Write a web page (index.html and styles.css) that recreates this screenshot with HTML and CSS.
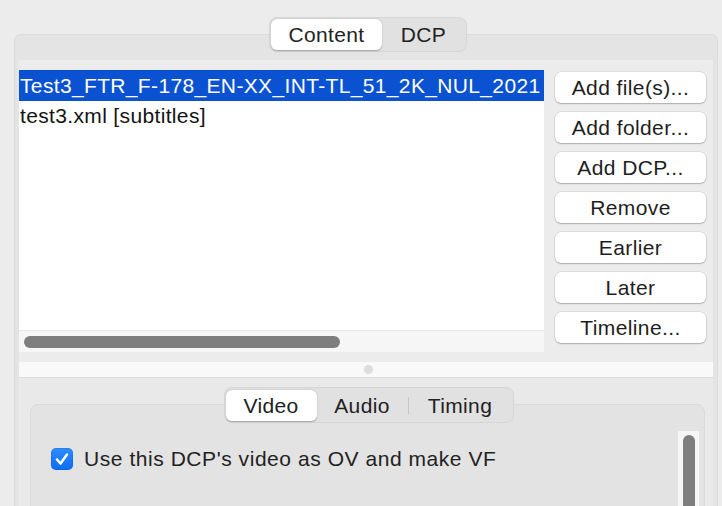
FILE: index.html
```html
<!DOCTYPE html>
<html>
<head>
<meta charset="utf-8">
<link rel="stylesheet" href="styles.css">
</head>
<body>
<div class="app">
  <div class="seg seg-outer">
    <div class="seg-item active">Content</div>
    <div class="seg-item">DCP</div>
  </div>
  <div class="panel">
    <div class="content-pane">
      <div class="list">
        <div class="rows">
          <div class="row selected">Test3_FTR_F-178_EN-XX_INT-TL_51_2K_NUL_2021</div>
          <div class="row">test3.xml [subtitles]</div>
        </div>
        <div class="hscroll"><div class="hthumb"></div></div>
      </div>
      <div class="buttons">
        <div class="btn">Add file(s)...</div>
        <div class="btn">Add folder...</div>
        <div class="btn">Add DCP...</div>
        <div class="btn">Remove</div>
        <div class="btn">Earlier</div>
        <div class="btn">Later</div>
        <div class="btn">Timeline...</div>
      </div>
    </div>
    <div class="sash"><div class="sash-dot"></div></div>
    <div class="lower">
      <div class="seg seg-inner">
        <div class="seg-item active">Video</div>
        <div class="seg-item">Audio</div>
        <div class="seg-sep"></div>
        <div class="seg-item">Timing</div>
      </div>
      <div class="inner-panel">
        <div class="inner-content">
          <label class="check-row">
            <span class="checkbox">
              <svg width="22" height="22" viewBox="0 0 22 22"><path d="M6 11.5 L9.5 15.5 L16 6.5" fill="none" stroke="#fff" stroke-width="2.6" stroke-linecap="round" stroke-linejoin="round"/></svg>
            </span>
            <span class="check-label">Use this DCP's video as OV and make VF</span>
          </label>
        </div>
        <div class="vscroll"><div class="vthumb"></div></div>
      </div>
    </div>
  </div>
</div>
</body>
</html>
```
FILE: styles.css
```css
html, body {
  margin: 0;
  padding: 0;
}
body {
  width: 722px;
  height: 506px;
  overflow: hidden;
  background: #ececec;
  font-family: "Liberation Sans", Arial, sans-serif;
  font-size: 21px;
  color: #1e1e1e;
}
.app {
  padding: 17px 0 0 14px;
  width: 704px;
}
.seg {
  position: relative;
  z-index: 2;
  display: flex;
  align-items: center;
  background: #e1e1e1;
  border: 1px solid #d6d6d6;
  border-radius: 8px;
  box-sizing: border-box;
  padding: 1px;
  margin: 0 auto;
}
.seg-outer {
  width: 198px;
  height: 35px;
  transform: translateX(2px);
}
.seg-inner {
  width: 290px;
  height: 36px;
  transform: translateX(1px);
}
.seg-item {
  height: 31px;
  line-height: 31px;
  text-align: center;
  letter-spacing: 0.35px;
  color: #222;
}
.seg-item.active {
  background: #fff;
  border-radius: 6px;
  box-shadow: 0 0.5px 1.5px rgba(0,0,0,0.28);
}
.seg-outer .seg-item:nth-child(1) { width: 112px; }
.seg-outer .seg-item:nth-child(2) { width: 84px; }
.seg-inner .seg-item:nth-child(1) { width: 91px; }
.seg-inner .seg-item:nth-child(2) { width: 91px; }
.seg-inner .seg-item:nth-child(4) { width: 103px; }
.seg-sep {
  width: 1px;
  height: 17px;
  background: #c6c6c6;
}
.panel {
  margin-top: -18px;
  height: 472px;
  overflow: hidden;
  box-sizing: border-box;
  border: 1px solid #dcdcdc;
  border-bottom: 0;
  border-radius: 7px 7px 0 0;
  background: #e4e4e4;
  padding: 25px 4px 0 4px;
}
.content-pane {
  display: flex;
  gap: 11px;
  background: #ececec;
  padding: 10px 7px 10px 0;
}
.list {
  width: 525px;
  height: 282px;
  background: #fff;
  display: flex;
  flex-direction: column;
}
.rows {
  flex: 1;
  overflow: hidden;
}
.row {
  height: 30px;
  line-height: 30px;
  padding-left: 1px;
  white-space: nowrap;
  letter-spacing: 0.35px;
  color: #141414;
}
.row.selected {
  background: #0a52d2;
  color: #fff;
  height: 31px;
  line-height: 32px;
}
.hscroll {
  height: 22px;
  background: #f6f6f6;
  border-top: 1px solid #e8e8e8;
  box-sizing: border-box;
  padding: 5px 0 0 5px;
}
.hthumb {
  width: 316px;
  height: 12px;
  border-radius: 6px;
  background: #7e7e7e;
}
.buttons {
  width: 151px;
  display: flex;
  flex-direction: column;
  gap: 9px;
  padding-top: 2px;
}
.btn {
  height: 31px;
  line-height: 31px;
  text-align: center;
  background: #fff;
  border-radius: 6px;
  box-shadow: 0 0 0 0.5px rgba(0,0,0,0.12), 0 1px 1.5px rgba(0,0,0,0.22);
  letter-spacing: 0.4px;
  color: #1e1e1e;
}
.sash {
  height: 16px;
  background: #f9f9f9;
  border-bottom: 1px solid #dcdcdc;
  box-sizing: border-box;
  display: flex;
  justify-content: center;
  align-items: center;
}
.sash-dot {
  width: 9px;
  height: 9px;
  border-radius: 50%;
  background: #dddddd;
  transform: translateX(2px);
}
.lower {
  background: #e9e9e9;
  padding: 9px 8px 0 11px;
  height: 140px;
}
.inner-panel {
  margin-top: -19px;
  height: 120px;
  background: #e3e3e3;
  border: 1px solid #dadada;
  border-radius: 8px;
  display: flex;
}
.inner-content {
  flex: 1;
  padding: 42px 0 0 20px;
}
.check-row {
  display: flex;
  align-items: center;
  gap: 11px;
}
.checkbox {
  width: 22px;
  height: 22px;
  border-radius: 5px;
  background: linear-gradient(#2f8cff, #0a6cf0);
  box-shadow: inset 0 0 0 0.5px rgba(0,0,0,0.15);
  display: block;
}
.checkbox svg { display: block; }
.check-label {
  color: #222;
  letter-spacing: 0.55px;
}
.vscroll {
  width: 21px;
  margin: 26px 5px 0 0;
  background: #f6f6f6;
  padding: 4px 4px 0 5px;
  box-sizing: border-box;
}
.vthumb {
  width: 12px;
  height: 120px;
  border-radius: 6px;
  background: #7e7e7e;
}
```
